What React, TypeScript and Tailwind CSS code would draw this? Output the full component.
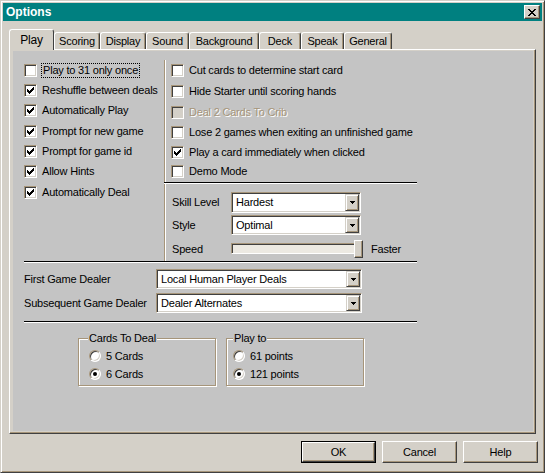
import React from 'react';

// shadow colour of this colour scheme is a warm tan instead of plain grey
const leftRows = [
  { label: 'Play to 31 only once', checked: false, h: 'h-[20px]', focus: true },
  { label: 'Reshuffle between deals', checked: true, h: 'h-[20px]' },
  { label: 'Automatically Play', checked: true, h: 'h-[21px]' },
  { label: 'Prompt for new game', checked: true, h: 'h-[21px]' },
  { label: 'Prompt for game id', checked: true, h: 'h-[19px]' },
  { label: 'Allow Hints', checked: true, h: 'h-[21px]' },
  { label: 'Automatically Deal', checked: true, h: 'h-[20px]' },
];

const rightRows = [
  { label: 'Cut cards to determine start card', checked: false, h: 'h-[20px]' },
  { label: 'Hide Starter until scoring hands', checked: false, h: 'h-[22px]' },
  { label: 'Deal 2 Cards To Crib', checked: false, h: 'h-[20px]', disabled: true },
  { label: 'Lose 2 games when exiting an unfinished game', checked: false, h: 'h-[20px]' },
  { label: 'Play a card immediately when clicked', checked: true, h: 'h-[20px]' },
  { label: 'Demo Mode', checked: false, h: 'h-[18px]' },
];

const tabs = [
  { label: 'Play', w: 'w-[45px]' },
  { label: 'Scoring', w: 'w-[46px]' },
  { label: 'Display', w: 'w-[46px]' },
  { label: 'Sound', w: 'w-[43px]' },
  { label: 'Background', w: 'w-[70px]' },
  { label: 'Deck', w: 'w-[42px]' },
  { label: 'Speak', w: 'w-[43px]' },
  { label: 'General', w: 'w-[48px]' },
];

function Tick() {
  return (
    <svg width="7" height="7" viewBox="0 0 7 7" shapeRendering="crispEdges">
      {[2, 3, 4, 3, 2, 1, 0].map((y, x) => (
        <rect key={x} x={x} y={y} width="1" height="3" fill="#000" />
      ))}
    </svg>
  );
}

function Box({ checked, disabled }: { checked?: boolean; disabled?: boolean }) {
  return (
    <span
      className={
        'flex h-[13px] w-[13px] shrink-0 items-center justify-center border border-t-[#a6957a] border-l-[#a6957a] border-r-white border-b-white shadow-[inset_1px_1px_#404040,inset_-1px_-1px_#d4d0c8] ' +
        (disabled ? 'bg-[#d4d0c8]' : 'bg-white')
      }
    >
      {checked && <Tick />}
    </span>
  );
}

function CheckRow({ label, checked, h, focus, disabled }: { label: string; checked: boolean; h: string; focus?: boolean; disabled?: boolean }) {
  return (
    <div className={'flex items-center ' + h}>
      <Box checked={checked} disabled={disabled} />
      {focus ? (
        <span className="ml-[4px] border border-dotted border-black px-[1px] leading-[13px]">{label}</span>
      ) : (
        <span className={'ml-[5px] whitespace-nowrap ' + (disabled ? 'text-[#a6957a] [text-shadow:1px_1px_#fff]' : '')}>{label}</span>
      )}
    </div>
  );
}

function Radio({ checked }: { checked?: boolean }) {
  return (
    <span className="flex h-[12px] w-[12px] shrink-0 items-center justify-center rounded-full border border-t-[#a6957a] border-l-[#a6957a] border-r-white border-b-white bg-white shadow-[inset_1px_1px_#404040,inset_-1px_-1px_#d4d0c8]">
      {checked && <span className="h-[4px] w-[4px] rounded-full bg-black" />}
    </span>
  );
}

function Arrow() {
  return (
    <svg width="5" height="3" viewBox="0 0 5 3" shapeRendering="crispEdges">
      <rect x="0" y="0" width="5" height="1" fill="#000" />
      <rect x="1" y="1" width="3" height="1" fill="#000" />
      <rect x="2" y="2" width="1" height="1" fill="#000" />
    </svg>
  );
}

function Combo({ value, w, h }: { value: string; w: string; h: string }) {
  return (
    <div className={'flex border border-t-[#a6957a] border-l-[#a6957a] border-r-white border-b-white bg-white p-[1px] shadow-[inset_1px_1px_#404040,inset_-1px_-1px_#d4d0c8] ' + w + ' ' + h}>
      <span className="flex flex-1 items-center pl-[3px]">{value}</span>
      <span className="flex w-[14px] items-center justify-center border border-t-[#d4d0c8] border-l-[#d4d0c8] border-r-[#404040] border-b-[#404040] bg-[#d4d0c8] shadow-[inset_1px_1px_#fff,inset_-1px_-1px_#a6957a]">
        <Arrow />
      </span>
    </div>
  );
}

function Button({ label, isDefault }: { label: string; isDefault?: boolean }) {
  return (
    <div className={'h-[22px] w-[75px] ' + (isDefault ? 'border border-black' : '')}>
      <div className="flex h-full items-center justify-center border border-t-white border-l-white border-r-[#404040] border-b-[#404040] bg-[#d4d0c8] shadow-[inset_-1px_-1px_#a6957a]">
        {label}
      </div>
    </div>
  );
}

function Group({ title, titleLeft, radioLeft, w, options }: { title: string; titleLeft: string; radioLeft: string; w: string; options: { label: string; checked: boolean }[] }) {
  return (
    <div className={'relative h-[48px] border border-[#a6957a] shadow-[inset_1px_1px_#fff,1px_1px_#fff] ' + w}>
      <span className={'absolute top-[-8px] bg-[#c4c4c4] px-[1px] leading-[14px] ' + titleLeft}>{title}</span>
      <div className={'flex flex-col pt-[8px] ' + radioLeft}>
        {options.map((o) => (
          <div key={o.label} className="flex h-[18px] items-center">
            <Radio checked={o.checked} />
            <span className="ml-[5px]">{o.label}</span>
          </div>
        ))}
      </div>
    </div>
  );
}

export default function App() {
  return (
    <div className="h-[473px] w-[545px] overflow-hidden border border-t-[#d4d0c8] border-l-[#d4d0c8] border-r-[#404040] border-b-[#404040] bg-[#d4d0c8] p-[2px] text-[11px] leading-none tracking-[-0.2px] text-black shadow-[inset_1px_1px_#fff,inset_-1px_-1px_#a6957a] [font-family:'Liberation_Sans',Arial,sans-serif]">
      {/* Title bar */}
      <div className="flex h-[18px] items-center justify-between bg-[#008080] pl-[3px] pr-[2px]">
        <span className="text-[12px] font-bold tracking-normal text-white">Options</span>
        <div className="flex h-[14px] w-[16px] items-center justify-center border border-t-white border-l-white border-r-[#404040] border-b-[#404040] bg-[#d4d0c8] shadow-[inset_-1px_-1px_#a6957a]">
          <svg width="8" height="7" viewBox="0 0 8 7" shapeRendering="crispEdges">
            {[0, 1, 2, 3, 2, 1, 0].map((o, r) => (
              <g key={r}>
                <rect x={o} y={r} width="2" height="1" fill="#000" />
                <rect x={6 - o} y={r} width="2" height="1" fill="#000" />
              </g>
            ))}
          </svg>
        </div>
      </div>

      {/* Tabs */}
      <div className="ml-[6px] mt-[8px] flex h-[20px] items-end">
        {tabs.map((t, i) =>
          i === 0 ? (
            <div
              key={t.label}
              className={'relative z-10 flex h-[21px] self-start items-start justify-center rounded-t-[3px] border border-b-0 border-t-white border-l-white border-r-[#404040] bg-[#d4d0c8] pt-[4px] text-[12px] ' + t.w}
            >
              {t.label}
            </div>
          ) : (
            <div
              key={t.label}
              className={'flex h-[17px] items-center justify-center rounded-t-[3px] border border-b-0 border-t-white border-l-white border-r-[#404040] bg-[#d4d0c8] shadow-[inset_-1px_0_#a6957a] ' + t.w}
            >
              {t.label}
            </div>
          )
        )}
      </div>

      {/* Panel */}
      <div className="ml-[6px] h-[385px] w-[527px] border border-t-white border-l-white border-r-[#404040] border-b-[#404040] pb-[2px] pl-[3px] pr-[2px] pt-[1px] shadow-[inset_-1px_-1px_#a6957a]">
        <div className="h-[380px] w-[520px] bg-[#c4c4c4]">
          <div className="flex h-[210px] pt-[9px]">
            {/* left checkbox column */}
            <div className="flex w-[151px] flex-col pl-[11px]">
              {leftRows.map((r) => (
                <CheckRow key={r.label} {...r} />
              ))}
            </div>
            <div className="w-[2px] border-l border-r border-l-[#a6957a] border-r-white" />
            {/* right column */}
            <div className="flex w-[251px] flex-col">
              <div className="flex flex-col pl-[5px]">
                {rightRows.map((r) => (
                  <CheckRow key={r.label} {...r} />
                ))}
              </div>
              <div className="ml-[-2px] mt-[2px] h-[2px] border-t border-b border-t-black border-b-white" />
              <div className="mt-[8px] flex flex-col gap-[2px] pl-[6px]">
                <div className="flex items-center">
                  <span className="w-[59px]">Skill Level</span>
                  <Combo value="Hardest" w="w-[130px]" h="h-[21px]" />
                </div>
                <div className="flex items-center">
                  <span className="w-[59px]">Style</span>
                  <Combo value="Optimal" w="w-[130px]" h="h-[20px]" />
                </div>
                <div className="mt-[3px] flex h-[18px] items-center">
                  <span className="w-[59px]">Speed</span>
                  <div className="relative h-[18px] w-[132px]">
                    <div className="absolute left-0 right-[3px] top-[3px] h-[11px] border border-t-[#a6957a] border-l-[#a6957a] border-r-white border-b-white bg-[#ece9e2] shadow-[inset_1px_1px_#404040]" />
                    <div className="absolute right-0 top-0 h-[18px] w-[9px] border border-t-white border-l-white border-r-[#404040] border-b-[#404040] bg-[#d4d0c8] shadow-[inset_-1px_-1px_#a6957a]" />
                  </div>
                  <span className="ml-[8px]">Faster</span>
                </div>
              </div>
            </div>
          </div>

          <div className="ml-[11px] h-[2px] w-[393px] border-t border-b border-t-black border-b-white" />

          {/* dealer */}
          <div className="ml-[11px] mt-[6px] flex flex-col gap-[4px]">
            <div className="flex items-center">
              <span className="w-[132px]">First Game Dealer</span>
              <Combo value="Local Human Player Deals" w="w-[206px]" h="h-[20px]" />
            </div>
            <div className="flex items-center">
              <span className="w-[132px]">Subsequent Game Dealer</span>
              <Combo value="Dealer Alternates" w="w-[206px]" h="h-[20px]" />
            </div>
          </div>

          <div className="ml-[11px] mt-[8px] h-[2px] w-[393px] border-t border-b border-t-black border-b-white" />

          {/* groups */}
          <div className="ml-[65px] mt-[15px] flex gap-[10px]">
            <Group
              title="Cards To Deal"
              titleLeft="left-[9px]"
              radioLeft="pl-[10px]"
              w="w-[138px]"
              options={[
                { label: '5 Cards', checked: false },
                { label: '6 Cards', checked: true },
              ]}
            />
            <Group
              title="Play to"
              titleLeft="left-[6px]"
              radioLeft="pl-[6px]"
              w="w-[138px]"
              options={[
                { label: '61 points', checked: false },
                { label: '121 points', checked: true },
              ]}
            />
          </div>
        </div>
      </div>

      {/* Buttons */}
      <div className="mr-[4px] mt-[7px] flex justify-end gap-[6px]">
        <Button label="OK" isDefault />
        <Button label="Cancel" />
        <Button label="Help" />
      </div>
    </div>
  );
}
